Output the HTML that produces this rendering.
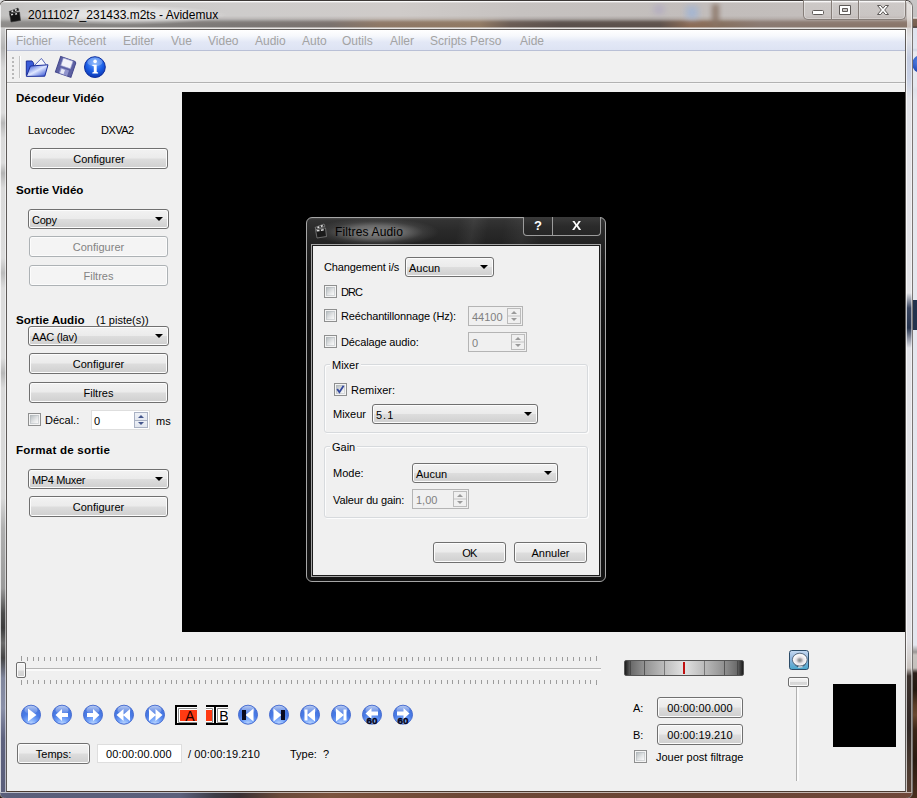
<!DOCTYPE html>
<html lang="fr">
<head>
<meta charset="utf-8">
<title>20111027_231433.m2ts - Avidemux</title>
<style>
html,body{margin:0;padding:0;}
body{width:917px;height:798px;overflow:hidden;position:relative;background:#2a1c14;font-family:"Liberation Sans",sans-serif;font-size:11px;color:#000;}
.abs{position:absolute;}
/* desktop strip on right */
#desk{left:905px;top:0;width:12px;height:798px;background:linear-gradient(#c8c6c6 0,#c4c2c2 17px,#f0eeee 18px,#7e6656 19.5px,#765e4e 26px,#3e3432 27.3px,#dfe3ee 28.5px,#e2e6f0 48px,#d0d6e6 50px,#e8eaf0 52px,#e6e8ee 86px,#dfe2ea 90px,#e6e8ee 100px,#e4e6ee 645px,#9a9694 652px,#c8c4c0 655px,#c4c0bc 668px,#2a1e18 673px,#24180f 690px,#5a3c26 705px,#6a4830 715px,#3a2416 730px,#2a1a10 760px,#4a2e1e 798px);}
/* main window frame */
#win{left:-1px;top:0;width:914px;height:799px;border-radius:7px 7px 7px 7px;background:#d6d2d0;box-sizing:border-box;border:1px solid rgba(60,56,54,.6);border-top-color:#3c3836;overflow:hidden;}
#glass{left:0;top:0;width:912px;height:29px;background:linear-gradient(90deg,#c3c2c1 0,#c8c7c6 30px,#cecccb 230px,#cfcbc9 400px,#c6c2c0 520px,#c2bdbb 700px,#c4bfbd 911px);}
#glines{left:0;top:0;width:912px;height:29px;background:linear-gradient(rgba(255,255,255,.9) 0,rgba(255,255,255,.85) 1px,rgba(255,255,255,0) 1.8px,rgba(255,255,255,0) 26px,rgba(235,232,230,.8) 27px,rgba(240,238,236,.9) 28px);}
#band{left:0;top:15px;width:912px;height:12px;background:linear-gradient(90deg,#8e8c8a 0,#858381 120px,#7c7876 230px,#7a726e 330px,#8e7866 380px,#917a64 480px,#6a5c54 510px,#5a504c 560px,#5e524c 660px,#8c6c56 690px,#86705f 720px,#8a7a72 760px,#8a766a 911px);-webkit-mask-image:linear-gradient(rgba(0,0,0,0) 0,rgba(0,0,0,.25) 3px,rgba(0,0,0,.9) 6px,#000 8px,#000 11px,rgba(0,0,0,.5) 12px);mask-image:linear-gradient(rgba(0,0,0,0) 0,rgba(0,0,0,.25) 3px,rgba(0,0,0,.9) 6px,#000 8px,#000 11px,rgba(0,0,0,.5) 12px);}
#tglow{left:22px;top:4px;width:205px;height:20px;background:radial-gradient(ellipse 50% 50% at 50% 50%,rgba(255,255,255,.6) 0,rgba(255,255,255,.45) 60%,rgba(255,255,255,0) 100%);}
#client{left:6px;top:28px;width:900px;height:763px;background:#f0f0f0;box-sizing:border-box;border:1px solid #5e5a58;border-bottom-color:#4a3a30;}
#menubar{left:7px;top:30px;width:898px;height:20px;background:linear-gradient(#ffffff 0,#f6f8fc 30%,#e3e8f6 60%,#dde3f3 100%);border-bottom:1px solid #b9c0d6;font-size:12px;color:#a3a3a3;}
#menubar span{position:absolute;top:4px;line-height:15px;white-space:nowrap;}
#toolbar{left:7px;top:51px;width:898px;height:31px;background:#f0f0f0;border-bottom:1px solid #b2b2b2;box-shadow:0 1px 0 #f6f6f6;}
#video{left:182px;top:92px;width:723px;height:540px;background:#000;}
#fl{left:0;top:27px;width:6px;height:771px;background:linear-gradient(#cfcfcf 0,#b4b4b4 20px,#d8d8d8 40px,#dcdcdc 85px,#b8b8b8 95px,#dadada 110px,#dcdcdc 135px,#b4b4b4 145px,#dadada 160px,#dcdcdc 230px,#bcbcbc 245px,#dcdcdc 260px,#dcdcdc 330px,#b8b8b8 345px,#dadada 360px,#d8d8d8 470px,#b0b0b0 500px,#9a9a9a 560px,#4c4c4c 585px,#3c3c3c 600px,#6a6a6a 615px,#444 630px,#80869c 650px,#8a90a8 680px,#5e627e 710px,#5a5e7a 771px);box-shadow:inset 1px 0 0 rgba(255,255,255,.75),inset -1px 0 0 rgba(255,255,255,.55);}
#fr{left:906px;top:27px;width:6px;height:771px;background:linear-gradient(#d8d4d2 0,#e2e2e6 10px,#c4cce0 30px,#c8d0e4 50px,#e2e3e8 70px,#e4e4e8 265px,#3a4660 280px,#26344e 300px,#8a90a0 310px,#e2e3e8 320px,#e2e2e6 610px,#d4d0ce 630px,#c8c2be 640px,#3a302c 648px,#2e2624 700px,#4a3a30 740px,#5a4034 771px);box-shadow:inset 1px 0 0 rgba(255,255,255,.7),inset -1px 0 0 rgba(255,255,255,.5);}
#fb{left:0;top:791px;width:912px;height:7px;background:linear-gradient(90deg,#5a5e7a 0,#5c607c 180px,#3c3c46 215px,#3a3034 240px,#6a4a3a 280px,#7c543e 330px,#6e4836 460px,#6a4434 700px,#70483a 912px);box-shadow:inset 0 1px 0 rgba(255,255,255,.6),inset 0 -1px 0 rgba(255,255,255,.35);}
#ui{left:0;top:0;width:917px;height:798px;}
.title{left:28px;top:6px;font-size:12px;line-height:16px;color:#000;white-space:nowrap;}
.lbl{position:absolute;white-space:nowrap;line-height:14px;height:14px;}
.b{font-weight:bold;font-size:11.6px;}
.btn{position:absolute;box-sizing:border-box;border:1px solid #707070;border-radius:3px;background:linear-gradient(#f2f2f2 0,#ebebeb 48%,#dddddd 52%,#cfcfcf 100%);box-shadow:inset 0 0 0 1px #fcfcfc;text-align:center;white-space:nowrap;}
.btn.dis{border-color:#adb2b5;background:#f4f4f4;color:#838383;box-shadow:inset 0 0 0 1px #fcfcfc;}
.combo{position:absolute;box-sizing:border-box;border:1px solid #707070;border-radius:3px;background:linear-gradient(#f2f2f2 0,#ebebeb 48%,#dddddd 52%,#cfcfcf 100%);box-shadow:inset 0 0 0 1px #fcfcfc;white-space:nowrap;text-align:left;padding-left:3px;}
.combo:after{content:"";position:absolute;right:5px;top:7px;border-left:4px solid transparent;border-right:4px solid transparent;border-top:4px solid #000;}
.chk{position:absolute;width:13px;height:13px;box-sizing:border-box;border:1px solid #8e8f8f;background:linear-gradient(135deg,#a9afb1 0,#c3c8ca 25%,#e4e6e7 55%,#f8f8f8 80%,#fff 100%);box-shadow:inset 0 0 0 1px #f4f4f4, inset 0 0 0 2px rgba(174,179,185,.45);}
.spin{position:absolute;box-sizing:border-box;border:1px solid #dedede;background:#fff;padding-left:6px;}
.spin.dis{border-color:#b4b4b4;background:#f0f0f0;color:#808080;}
.sb{position:absolute;right:1px;top:1px;width:14px;bottom:1px;background:linear-gradient(#eef1f7 0,#e4e8f0 49%,#aab2c4 50%,#aab2c4 54%,#eef1f7 55%,#e2e6ee 100%);border:1px solid #aab2c4;box-sizing:border-box;}
.sb:before{content:"";position:absolute;left:3px;top:2px;border-left:3px solid transparent;border-right:3px solid transparent;border-bottom:3px solid #44568c;}
.sb:after{content:"";position:absolute;left:3px;bottom:2px;border-left:3px solid transparent;border-right:3px solid transparent;border-top:3px solid #44568c;}
.spin.dis .sb{border-color:#bcbcbc;background:linear-gradient(#f0f0f0 0,#f0f0f0 46%,#bcbcbc 47%,#bcbcbc 53%,#f0f0f0 54%,#f0f0f0 100%);}
.spin.dis .sb:before{border-bottom-color:#9a9a9a;}
.spin.dis .sb:after{border-top-color:#9a9a9a;}
#dlg{left:306px;top:217px;width:300px;height:365px;box-sizing:border-box;border:1px solid #a6a6a6;border-radius:6px;background:linear-gradient(100deg,rgba(255,255,255,0) 0,rgba(255,255,255,0) 150px,rgba(255,255,255,.06) 165px,rgba(255,255,255,0) 180px,rgba(255,255,255,0) 195px,rgba(255,255,255,.05) 215px,rgba(255,255,255,0) 235px) 0 0/100% 27px no-repeat,linear-gradient(#484848 0,#333 2px,#2a2a2a 12px,#222 26px,#1a1a1a 50px,#131313 110px);}
#dglow{left:6px;top:0px;width:126px;height:27px;background:radial-gradient(ellipse 50% 52% at 50% 52%,rgba(140,140,140,.9) 0,rgba(125,125,125,.75) 45%,rgba(90,90,90,.35) 75%,rgba(50,50,50,0) 100%);}
#dcap{left:216px;top:-1px;width:78px;height:19px;box-sizing:border-box;border:1px solid #9c9c9c;border-top:none;border-radius:0 0 4px 4px;background:linear-gradient(#3a3a3a,#2b2b2b 50%,#262626);color:#fff;}
#dcap b{position:absolute;top:0;height:18px;line-height:18px;text-align:center;font-size:13px;font-family:"Liberation Sans",sans-serif;}
#dcap i{position:absolute;left:28px;top:0;width:1px;height:18px;background:#9c9c9c;}
#dcl{left:4px;top:26px;width:290px;height:333px;box-sizing:border-box;border:1px solid #a4a4a4;background:#f0f0f0;box-shadow:inset 0 0 0 1px #1c1c1c;}
.grp{position:absolute;box-sizing:border-box;border:1px solid #d7dadd;border-radius:3px;box-shadow:inset 1px 1px 0 #fcfcfc,1px 1px 0 #fcfcfc;}
.gl{background:#f0f0f0;padding:0 2px;}
#cap{left:803px;top:0;width:103px;height:20px;box-sizing:border-box;border:1px solid #857d78;border-top:none;border-radius:0 0 5px 5px;background:linear-gradient(rgba(255,255,255,.18),rgba(255,255,255,.08));box-shadow:inset 0 0 0 1px rgba(255,255,255,.35);}
#cap i{position:absolute;top:0;width:1px;height:19px;background:#857d78;box-shadow:1px 0 0 rgba(255,255,255,.3);}
</style>
</head>
<body>
<div class="abs" style="left:0;top:0;width:5px;height:5px;background:#dcdcdc"></div><div id="desk" class="abs"><div class="abs" style="left:7px;top:55px;width:18px;height:18px;border-radius:9px;background:radial-gradient(circle at 40% 35%,#5a8ae8 0,#2a54c0 55%,#16307c 100%)"></div><div class="abs" style="left:7px;top:300px;width:10px;height:30px;background:#22324c"></div></div>
<div id="win" class="abs">
 <div id="glass" class="abs"></div><div id="band" class="abs"></div><div class="abs" style="left:686px;top:5px;width:12px;height:13px;background:#9fb4d6;filter:blur(3px);opacity:.8"></div><div class="abs" style="left:712px;top:3px;width:7px;height:22px;background:#8a7466;filter:blur(2.5px);opacity:.85"></div><div class="abs" style="left:654px;top:4px;width:10px;height:9px;background:#a9a2c4;filter:blur(3px);opacity:.6"></div><div id="glines" class="abs"></div><div class="abs" style="left:0;top:4px;width:1px;height:23px;background:rgba(255,255,255,.75)"></div><div class="abs" style="left:907px;top:2px;width:5px;height:26px;background:linear-gradient(rgba(232,229,227,.9),rgba(226,220,216,.85) 60%,rgba(214,204,198,.8));border-radius:0 5px 0 0"></div><div class="abs" style="left:911px;top:4px;width:1px;height:23px;background:rgba(255,255,255,.6)"></div><div id="tglow" class="abs"></div>
 <div class="abs title">20111027_231433.m2ts - Avidemux</div>
 <div id="fl" class="abs"></div><div id="fr" class="abs"></div><div id="fb" class="abs"></div><div id="client" class="abs"></div>
</div>
<div id="ui" class="abs">
  <div id="cap" class="abs"><i style="left:27px"></i><i style="left:54px"></i>
<svg class="abs" style="left:0;top:0" width="102" height="20" viewBox="0 0 102 20">
<rect x="8.5" y="10.5" width="11" height="4" rx="1" fill="#fff" stroke="#5e5a58" stroke-width="1"/>
<path d="M35.5 5.5 h11 v9 h-11 Z M38.5 8.5 v3 h5 v-3 Z" fill="#fff" fill-rule="evenodd" stroke="#5e5a58" stroke-width="1"/>
<path d="M73.5 5.5 h3.2 l2.3 2.8 l2.3 -2.8 h3.2 l-3.8 4.5 l3.8 4.5 h-3.2 l-2.3 -2.8 l-2.3 2.8 h-3.2 l3.8 -4.5 Z" fill="#fff" stroke="#5e5a58" stroke-width="1" stroke-linejoin="round"/>
</svg></div>
<svg class="abs" style="left:8px;top:7px" width="14" height="16" viewBox="0 0 14 16">
<path d="M1.5 6.5 L11.5 5 L12.5 13.5 L3 15 Z" fill="#141414" stroke="#3a3a3a" stroke-width=".6"/>
<path d="M1 4.5 L10 1 L11 3.2 L2 6.6 Z" fill="#1c1c1c" stroke="#444" stroke-width=".5"/>
<path d="M3.2 3.9 L5 3.2 L5.6 4.6 L3.8 5.3 Z M6.6 2.6 L8.4 1.9 L9 3.3 L7.2 4 Z" fill="#f2f2f2"/>
<path d="M3 7 L5 6.7 L5.2 8.1 L3.2 8.4 Z M7 6.4 L9 6.1 L9.2 7.5 L7.2 7.8 Z" fill="#dcdcdc"/>
</svg>
  <div id="menubar" class="abs">
   <span style="left:9px">Fichier</span><span style="left:61px">Récent</span><span style="left:116px">Editer</span><span style="left:164px">Vue</span><span style="left:201px">Video</span><span style="left:248px">Audio</span><span style="left:295px">Auto</span><span style="left:335px">Outils</span><span style="left:383px">Aller</span><span style="left:423px">Scripts Perso</span><span style="left:513px">Aide</span>
  </div>
  <div id="toolbar" class="abs">
   <div class="abs" style="left:5px;top:6px;width:2px;height:22px;background:repeating-linear-gradient(#b8b8b8 0,#b8b8b8 2px,transparent 2px,transparent 4px);"></div>
   <div class="abs" style="left:12px;top:5px;width:1px;height:22px;background:#c4c4c4;border-right:1px solid #fff;"></div>
   <svg class="abs" style="left:18px;top:4px" width="26" height="24" viewBox="0 0 26 24">
    <path d="M8 12 L16.4 3.4 L21 9.6 L12 18 Z" fill="#f7f8fc" stroke="#5a68b8" stroke-width="1"/>
    <path d="M1.3 6 L7 6 L8.6 8.2 L8.6 20.5 L1.3 20.5 Z" fill="#3a5cd8" stroke="#1c2f9a" stroke-width="1"/>
    <defs><linearGradient id="fo" x1="0" y1="0" x2="1" y2="1"><stop offset="0" stop-color="#1c3fd0"/><stop offset=".5" stop-color="#dfe7ff"/><stop offset="1" stop-color="#1b3ccc"/></linearGradient></defs>
    <path d="M5.4 11 L23 9.8 L19.8 21.2 L1.4 21.4 Z" fill="url(#fo)" stroke="#1c2f9a" stroke-width="1"/>
   </svg>
   <svg class="abs" style="left:46px;top:3px" width="26" height="26" viewBox="0 0 26 26">
    <g transform="rotate(19 12.8 12.9)">
    <path d="M4.6 4.7 L19.6 4.7 L21 6.1 L21 21.1 L4.6 21.1 Z" fill="#5c60a2" stroke="#44488c" stroke-width="1"/>
    <rect x="7.6" y="5.2" width="10.2" height="8" fill="#f2f2f8" stroke="#9a9ed0" stroke-width=".6"/>
    <rect x="8.2" y="15.2" width="8.8" height="5.9" fill="#9094cc"/>
    <rect x="9.4" y="16" width="3.6" height="4.6" fill="#e8eaf6"/>
    </g>
   </svg>
   <svg class="abs" style="left:75px;top:3px" width="26" height="26" viewBox="0 0 26 26">
    <defs><radialGradient id="ig" cx=".5" cy=".3" r=".75"><stop offset="0" stop-color="#6aa8ff"/><stop offset=".55" stop-color="#1a5ee6"/><stop offset="1" stop-color="#0a2fa8"/></radialGradient></defs>
    <circle cx="12.9" cy="13.1" r="10.4" fill="url(#ig)" stroke="#0c2c9c" stroke-width="1"/>
    <ellipse cx="12.9" cy="8" rx="7.6" ry="4.4" fill="#fff" opacity=".25"/>
    <circle cx="13.1" cy="7.4" r="1.8" fill="#fff"/>
    <path d="M10.3 10.8 L14.7 10.8 L14.7 18 L16.1 18.6 L16.1 19.6 L10.3 19.6 L10.3 18.6 L11.8 18 L11.8 12.2 L10.3 11.8 Z" fill="#fff"/>
   </svg>
  </div>
  <div id="video" class="abs"></div>
<div class="lbl b" style="left:16px;top:91px">Décodeur Vidéo</div>
<div class="lbl " style="left:28px;top:123px">Lavcodec</div>
<div class="lbl " style="left:101px;top:123px"><span style="letter-spacing:-0.55px">DXVA2</span></div>
<div class="btn " style="left:30px;top:148px;width:138px;height:21px;line-height:21px">Configurer</div>
<div class="lbl b" style="left:16px;top:183px">Sortie Vidéo</div>
<div class="combo" style="left:28px;top:209px;width:141px;height:20px;line-height:21px"><span style="letter-spacing:-0.25px">Copy</span></div>
<div class="btn dis" style="left:29px;top:236px;width:139px;height:21px;line-height:21px">Configurer</div>
<div class="btn dis" style="left:29px;top:265px;width:139px;height:21px;line-height:21px">Filtres</div>
<div class="lbl b" style="left:16px;top:313px">Sortie Audio</div>
<div class="lbl " style="left:96px;top:313px">(1 piste(s))</div>
<div class="combo" style="left:28px;top:326px;width:141px;height:20px;line-height:21px"><span style="letter-spacing:-0.2px">AAC (lav)</span></div>
<div class="btn " style="left:29px;top:353px;width:139px;height:21px;line-height:21px">Configurer</div>
<div class="btn " style="left:29px;top:382px;width:139px;height:21px;line-height:21px">Filtres</div>
<div class="chk" style="left:28px;top:413px"></div>
<div class="lbl " style="left:45px;top:413px">Décal.:</div>
<div class="spin" style="left:91px;top:410px;width:59px;height:20px;line-height:20px;padding-left:2px">0<div class="sb"></div></div>
<div class="lbl " style="left:156px;top:414px">ms</div>
<div class="lbl b" style="left:16px;top:443px"><span style="letter-spacing:.2px">Format de sortie</span></div>
<div class="combo" style="left:28px;top:469px;width:141px;height:20px;line-height:21px"><span style="letter-spacing:-0.35px">MP4 Muxer</span></div>
<div class="btn " style="left:29px;top:496px;width:139px;height:21px;line-height:21px">Configurer</div>
<svg class="abs" style="left:20px;top:656px" width="580" height="5" fill="#9c9c9c"><rect x="1" y="0" width="1" height="5"/><rect x="7" y="1" width="1" height="4"/><rect x="13" y="1" width="1" height="4"/><rect x="18" y="1" width="1" height="4"/><rect x="24" y="1" width="1" height="4"/><rect x="30" y="1" width="1" height="4"/><rect x="36" y="1" width="1" height="4"/><rect x="41" y="1" width="1" height="4"/><rect x="47" y="1" width="1" height="4"/><rect x="53" y="1" width="1" height="4"/><rect x="59" y="1" width="1" height="4"/><rect x="64" y="1" width="1" height="4"/><rect x="70" y="1" width="1" height="4"/><rect x="76" y="1" width="1" height="4"/><rect x="82" y="1" width="1" height="4"/><rect x="87" y="1" width="1" height="4"/><rect x="93" y="1" width="1" height="4"/><rect x="99" y="1" width="1" height="4"/><rect x="105" y="1" width="1" height="4"/><rect x="110" y="1" width="1" height="4"/><rect x="116" y="1" width="1" height="4"/><rect x="122" y="1" width="1" height="4"/><rect x="128" y="1" width="1" height="4"/><rect x="133" y="1" width="1" height="4"/><rect x="139" y="1" width="1" height="4"/><rect x="145" y="1" width="1" height="4"/><rect x="151" y="1" width="1" height="4"/><rect x="156" y="1" width="1" height="4"/><rect x="162" y="1" width="1" height="4"/><rect x="168" y="1" width="1" height="4"/><rect x="174" y="1" width="1" height="4"/><rect x="179" y="1" width="1" height="4"/><rect x="185" y="1" width="1" height="4"/><rect x="191" y="1" width="1" height="4"/><rect x="197" y="1" width="1" height="4"/><rect x="202" y="1" width="1" height="4"/><rect x="208" y="1" width="1" height="4"/><rect x="214" y="1" width="1" height="4"/><rect x="220" y="1" width="1" height="4"/><rect x="225" y="1" width="1" height="4"/><rect x="231" y="1" width="1" height="4"/><rect x="237" y="1" width="1" height="4"/><rect x="243" y="1" width="1" height="4"/><rect x="248" y="1" width="1" height="4"/><rect x="254" y="1" width="1" height="4"/><rect x="260" y="1" width="1" height="4"/><rect x="266" y="1" width="1" height="4"/><rect x="271" y="1" width="1" height="4"/><rect x="277" y="1" width="1" height="4"/><rect x="283" y="1" width="1" height="4"/><rect x="289" y="1" width="1" height="4"/><rect x="294" y="1" width="1" height="4"/><rect x="300" y="1" width="1" height="4"/><rect x="306" y="1" width="1" height="4"/><rect x="312" y="1" width="1" height="4"/><rect x="317" y="1" width="1" height="4"/><rect x="323" y="1" width="1" height="4"/><rect x="329" y="1" width="1" height="4"/><rect x="335" y="1" width="1" height="4"/><rect x="340" y="1" width="1" height="4"/><rect x="346" y="1" width="1" height="4"/><rect x="352" y="1" width="1" height="4"/><rect x="358" y="1" width="1" height="4"/><rect x="363" y="1" width="1" height="4"/><rect x="369" y="1" width="1" height="4"/><rect x="375" y="1" width="1" height="4"/><rect x="381" y="1" width="1" height="4"/><rect x="386" y="1" width="1" height="4"/><rect x="392" y="1" width="1" height="4"/><rect x="398" y="1" width="1" height="4"/><rect x="404" y="1" width="1" height="4"/><rect x="409" y="1" width="1" height="4"/><rect x="415" y="1" width="1" height="4"/><rect x="421" y="1" width="1" height="4"/><rect x="427" y="1" width="1" height="4"/><rect x="432" y="1" width="1" height="4"/><rect x="438" y="1" width="1" height="4"/><rect x="444" y="1" width="1" height="4"/><rect x="450" y="1" width="1" height="4"/><rect x="455" y="1" width="1" height="4"/><rect x="461" y="1" width="1" height="4"/><rect x="467" y="1" width="1" height="4"/><rect x="473" y="1" width="1" height="4"/><rect x="478" y="1" width="1" height="4"/><rect x="484" y="1" width="1" height="4"/><rect x="490" y="1" width="1" height="4"/><rect x="496" y="1" width="1" height="4"/><rect x="501" y="1" width="1" height="4"/><rect x="507" y="1" width="1" height="4"/><rect x="513" y="1" width="1" height="4"/><rect x="519" y="1" width="1" height="4"/><rect x="524" y="1" width="1" height="4"/><rect x="530" y="1" width="1" height="4"/><rect x="536" y="1" width="1" height="4"/><rect x="542" y="1" width="1" height="4"/><rect x="547" y="1" width="1" height="4"/><rect x="553" y="1" width="1" height="4"/><rect x="559" y="1" width="1" height="4"/><rect x="565" y="1" width="1" height="4"/><rect x="570" y="1" width="1" height="4"/><rect x="576" y="0" width="1" height="5"/></svg>
<svg class="abs" style="left:20px;top:680px" width="580" height="5" fill="#9c9c9c"><rect x="1" y="0" width="1" height="5"/><rect x="7" y="0" width="1" height="4"/><rect x="13" y="0" width="1" height="4"/><rect x="18" y="0" width="1" height="4"/><rect x="24" y="0" width="1" height="4"/><rect x="30" y="0" width="1" height="4"/><rect x="36" y="0" width="1" height="4"/><rect x="41" y="0" width="1" height="4"/><rect x="47" y="0" width="1" height="4"/><rect x="53" y="0" width="1" height="4"/><rect x="59" y="0" width="1" height="4"/><rect x="64" y="0" width="1" height="4"/><rect x="70" y="0" width="1" height="4"/><rect x="76" y="0" width="1" height="4"/><rect x="82" y="0" width="1" height="4"/><rect x="87" y="0" width="1" height="4"/><rect x="93" y="0" width="1" height="4"/><rect x="99" y="0" width="1" height="4"/><rect x="105" y="0" width="1" height="4"/><rect x="110" y="0" width="1" height="4"/><rect x="116" y="0" width="1" height="4"/><rect x="122" y="0" width="1" height="4"/><rect x="128" y="0" width="1" height="4"/><rect x="133" y="0" width="1" height="4"/><rect x="139" y="0" width="1" height="4"/><rect x="145" y="0" width="1" height="4"/><rect x="151" y="0" width="1" height="4"/><rect x="156" y="0" width="1" height="4"/><rect x="162" y="0" width="1" height="4"/><rect x="168" y="0" width="1" height="4"/><rect x="174" y="0" width="1" height="4"/><rect x="179" y="0" width="1" height="4"/><rect x="185" y="0" width="1" height="4"/><rect x="191" y="0" width="1" height="4"/><rect x="197" y="0" width="1" height="4"/><rect x="202" y="0" width="1" height="4"/><rect x="208" y="0" width="1" height="4"/><rect x="214" y="0" width="1" height="4"/><rect x="220" y="0" width="1" height="4"/><rect x="225" y="0" width="1" height="4"/><rect x="231" y="0" width="1" height="4"/><rect x="237" y="0" width="1" height="4"/><rect x="243" y="0" width="1" height="4"/><rect x="248" y="0" width="1" height="4"/><rect x="254" y="0" width="1" height="4"/><rect x="260" y="0" width="1" height="4"/><rect x="266" y="0" width="1" height="4"/><rect x="271" y="0" width="1" height="4"/><rect x="277" y="0" width="1" height="4"/><rect x="283" y="0" width="1" height="4"/><rect x="289" y="0" width="1" height="4"/><rect x="294" y="0" width="1" height="4"/><rect x="300" y="0" width="1" height="4"/><rect x="306" y="0" width="1" height="4"/><rect x="312" y="0" width="1" height="4"/><rect x="317" y="0" width="1" height="4"/><rect x="323" y="0" width="1" height="4"/><rect x="329" y="0" width="1" height="4"/><rect x="335" y="0" width="1" height="4"/><rect x="340" y="0" width="1" height="4"/><rect x="346" y="0" width="1" height="4"/><rect x="352" y="0" width="1" height="4"/><rect x="358" y="0" width="1" height="4"/><rect x="363" y="0" width="1" height="4"/><rect x="369" y="0" width="1" height="4"/><rect x="375" y="0" width="1" height="4"/><rect x="381" y="0" width="1" height="4"/><rect x="386" y="0" width="1" height="4"/><rect x="392" y="0" width="1" height="4"/><rect x="398" y="0" width="1" height="4"/><rect x="404" y="0" width="1" height="4"/><rect x="409" y="0" width="1" height="4"/><rect x="415" y="0" width="1" height="4"/><rect x="421" y="0" width="1" height="4"/><rect x="427" y="0" width="1" height="4"/><rect x="432" y="0" width="1" height="4"/><rect x="438" y="0" width="1" height="4"/><rect x="444" y="0" width="1" height="4"/><rect x="450" y="0" width="1" height="4"/><rect x="455" y="0" width="1" height="4"/><rect x="461" y="0" width="1" height="4"/><rect x="467" y="0" width="1" height="4"/><rect x="473" y="0" width="1" height="4"/><rect x="478" y="0" width="1" height="4"/><rect x="484" y="0" width="1" height="4"/><rect x="490" y="0" width="1" height="4"/><rect x="496" y="0" width="1" height="4"/><rect x="501" y="0" width="1" height="4"/><rect x="507" y="0" width="1" height="4"/><rect x="513" y="0" width="1" height="4"/><rect x="519" y="0" width="1" height="4"/><rect x="524" y="0" width="1" height="4"/><rect x="530" y="0" width="1" height="4"/><rect x="536" y="0" width="1" height="4"/><rect x="542" y="0" width="1" height="4"/><rect x="547" y="0" width="1" height="4"/><rect x="553" y="0" width="1" height="4"/><rect x="559" y="0" width="1" height="4"/><rect x="565" y="0" width="1" height="4"/><rect x="570" y="0" width="1" height="4"/><rect x="576" y="0" width="1" height="5"/></svg>
<div class="abs" style="left:18px;top:668px;width:583px;height:1px;background:#b4b4b4;border-bottom:2px solid #fafafa"></div>
<div class="abs" style="left:16px;top:662px;width:10px;height:16px;box-sizing:border-box;border:1px solid #6e6e6e;border-radius:2px;background:linear-gradient(#f4f4f4 0,#ececec 50%,#d8d8d8 60%,#d0d0d0 100%);box-shadow:inset 0 0 0 1px #fafafa"></div>
<svg width="0" height="0" style="position:absolute"><defs>
<radialGradient id="pb" cx=".5" cy="1" r=".95"><stop offset="0" stop-color="#c4dcff"/><stop offset=".3" stop-color="#7aa8fa"/><stop offset=".6" stop-color="#4a7ce6"/><stop offset="1" stop-color="#4272dc"/></radialGradient>
<linearGradient id="ph" x1="0" y1="0" x2="0" y2="1"><stop offset="0" stop-color="#fff" stop-opacity=".6"/><stop offset="1" stop-color="#fff" stop-opacity=".05"/></linearGradient>
<g id="pbb"><circle cx="11" cy="10.7" r="9.5" fill="url(#pb)" stroke="#456bd0" stroke-width="1"/><ellipse cx="11" cy="6" rx="6.6" ry="4.2" fill="url(#ph)"/></g>
</defs></svg>
<svg class="abs" style="left:20px;top:704px" width="22" height="22" viewBox="0 0 22 22"><use href="#pbb"/><path d="M8 4.5 L16.5 11 L8 17.5 Z" fill="#fff"/></svg>
<svg class="abs" style="left:51px;top:704px" width="22" height="22" viewBox="0 0 22 22"><use href="#pbb"/><path d="M4.5 11 L11 5 L11 9 L17 9 L17 13 L11 13 L11 17 Z" fill="#fff"/></svg>
<svg class="abs" style="left:82px;top:704px" width="22" height="22" viewBox="0 0 22 22"><use href="#pbb"/><path d="M17.5 11 L11 5 L11 9 L5 9 L5 13 L11 13 L11 17 Z" fill="#fff"/></svg>
<svg class="abs" style="left:113px;top:704px" width="22" height="22" viewBox="0 0 22 22"><use href="#pbb"/><path d="M3.5 11 L10.5 5 L10.5 17 Z M10 11 L17 5 L17 17 Z" fill="#fff"/></svg>
<svg class="abs" style="left:144px;top:704px" width="22" height="22" viewBox="0 0 22 22"><use href="#pbb"/><path d="M18.5 11 L11.5 5 L11.5 17 Z M12 11 L5 5 L5 17 Z" fill="#fff"/></svg>
<svg class="abs" style="left:175px;top:705px" width="22" height="20" viewBox="0 0 22 20">
<rect x="0" y="0" width="22" height="20" fill="#fff"/>
<path d="M22 1 L1 1 L1 19 L22 19" fill="none" stroke="#000" stroke-width="2"/>
<path d="M22 3.5 L3.5 3.5 L3.5 17.5 L22 17.5" fill="none" stroke="#8c8c8c" stroke-width="1"/>
<rect x="5" y="5" width="17" height="11" fill="#ff3a12"/>
<text x="15" y="15.5" font-family="Liberation Sans, sans-serif" font-size="14" text-anchor="middle" fill="#200">A</text>
</svg>
<svg class="abs" style="left:206px;top:705px" width="22" height="20" viewBox="0 0 22 20">
<rect x="0" y="0" width="22" height="20" fill="#fff"/>
<path d="M0 1 L22 1 M0 19 L22 19 M9 1 L9 19" fill="none" stroke="#000" stroke-width="2"/>
<path d="M0 3.5 L6.5 3.5 L6.5 17.5 L0 17.5 M22 3.5 L11.5 3.5 L11.5 17.5 L22 17.5" fill="none" stroke="#8c8c8c" stroke-width="1"/>
<rect x="0" y="5" width="6" height="11" fill="#ff3a12"/>
<text x="18" y="15.5" font-family="Liberation Sans, sans-serif" font-size="14" text-anchor="middle" fill="#000">B</text>
</svg>
<svg class="abs" style="left:237px;top:704px" width="22" height="22" viewBox="0 0 22 22"><use href="#pbb"/><path d="M16.5 4.5 L8.5 11 L16.5 17.5 Z" fill="#fff"/><rect x="5" y="6" width="4" height="10" fill="#0a0a1e"/></svg>
<svg class="abs" style="left:268px;top:704px" width="22" height="22" viewBox="0 0 22 22"><use href="#pbb"/><path d="M5.5 4.5 L13.5 11 L5.5 17.5 Z" fill="#fff"/><rect x="13" y="6" width="4" height="10" fill="#0a0a1e"/></svg>
<svg class="abs" style="left:299px;top:704px" width="22" height="22" viewBox="0 0 22 22"><use href="#pbb"/><path d="M16 4.5 L8 11 L16 17.5 Z" fill="#fff"/><rect x="5.5" y="5.5" width="3" height="11" fill="#fff"/></svg>
<svg class="abs" style="left:330px;top:704px" width="22" height="22" viewBox="0 0 22 22"><use href="#pbb"/><path d="M6 4.5 L14 11 L6 17.5 Z" fill="#fff"/><rect x="13.5" y="5.5" width="3" height="11" fill="#fff"/></svg>
<svg class="abs" style="left:361px;top:704px" width="22" height="22" viewBox="0 0 22 22"><use href="#pbb"/><path d="M4.5 9.5 L10.5 4 L10.5 7.5 L17 7.5 L17 11.5 L10.5 11.5 L10.5 15 Z" fill="#fff"/><text x="5.5" y="20" font-family="Liberation Sans, sans-serif" font-size="8.5" font-weight="bold" textLength="11" lengthAdjust="spacingAndGlyphs" fill="#04041a" stroke="#04041a" stroke-width=".4">60</text></svg>
<svg class="abs" style="left:392px;top:704px" width="22" height="22" viewBox="0 0 22 22"><use href="#pbb"/><path d="M17.5 9.5 L11.5 4 L11.5 7.5 L5 7.5 L5 11.5 L11.5 11.5 L11.5 15 Z" fill="#fff"/><text x="5.5" y="20" font-family="Liberation Sans, sans-serif" font-size="8.5" font-weight="bold" textLength="11" lengthAdjust="spacingAndGlyphs" fill="#04041a" stroke="#04041a" stroke-width=".4">60</text></svg>
<div class="btn " style="left:17px;top:743px;width:73px;height:21px;line-height:21px">Temps:</div>
<div class="spin" style="left:97px;top:744px;width:85px;height:19px;line-height:18px;padding-left:8px;letter-spacing:.12px">00:00:00.000</div>
<div class="lbl " style="left:188px;top:747px"><span style="letter-spacing:.12px">/ 00:00:19.210</span></div>
<div class="lbl " style="left:290px;top:747px">Type:&nbsp; ?</div>
<div class="abs" style="left:624px;top:660px;width:120px;height:16px;box-sizing:border-box;border:1px solid #555;border-radius:2px;background:linear-gradient(90deg,#1c1c1c 0,#4a4a4a 3%,#6a6a6a 5%,#8e8e8e 15%,#b4b4b4 30%,#e2e2e2 50%,#b4b4b4 70%,#8e8e8e 85%,#6a6a6a 95%,#4a4a4a 97%,#1c1c1c 100%);">
<i class="abs" style="left:5px;top:0;width:1px;height:14px;background:#2e2e2e;opacity:.5"></i><i class="abs" style="left:19px;top:0;width:1px;height:14px;background:#555"></i><i class="abs" style="left:39px;top:0;width:1px;height:14px;background:#777"></i><i class="abs" style="left:79px;top:0;width:1px;height:14px;background:#777"></i><i class="abs" style="left:99px;top:0;width:1px;height:14px;background:#555"></i><i class="abs" style="left:112px;top:0;width:1px;height:14px;background:#2e2e2e;opacity:.5"></i>
<i class="abs" style="left:58px;top:1px;width:2px;height:12px;background:#c01010"></i></div>
<div class="lbl " style="left:633px;top:701px">A:</div>
<div class="btn " style="left:657px;top:697px;width:86px;height:21px;line-height:21px"><span style="letter-spacing:.12px">00:00:00.000</span></div>
<div class="lbl " style="left:633px;top:728px">B:</div>
<div class="btn " style="left:657px;top:724px;width:86px;height:21px;line-height:21px"><span style="letter-spacing:.12px">00:00:19.210</span></div>
<div class="chk" style="left:634px;top:750px"></div>
<div class="lbl " style="left:656px;top:750px">Jouer post filtrage</div>
<svg class="abs" style="left:789px;top:650px" width="20" height="20" viewBox="0 0 20 20">
<defs><linearGradient id="vg" x1="0" y1="0" x2="0" y2="1"><stop offset="0" stop-color="#c6daf2"/><stop offset=".45" stop-color="#8fb5dd"/><stop offset="1" stop-color="#48a6cc"/></linearGradient>
<radialGradient id="vc" cx=".5" cy=".55" r=".55"><stop offset="0" stop-color="#7c8e86"/><stop offset=".22" stop-color="#a9a6aa"/><stop offset=".45" stop-color="#e6e2e6"/><stop offset=".8" stop-color="#fbfbfb"/><stop offset="1" stop-color="#c4c9d2"/></radialGradient></defs>
<rect x=".5" y=".5" width="19" height="19" rx="2.2" fill="url(#vg)" stroke="#2c4c68"/>
<path d="M5.2 13.2 Q10.8 20.5 16.6 13.4" fill="none" stroke="#2e4e6a" stroke-width="1.3"/>
<ellipse cx="10.8" cy="9.6" rx="7.4" ry="6.4" fill="url(#vc)" stroke="#46586c" stroke-width=".8"/>
<path d="M9.2 17.1 L13.6 16.7" fill="none" stroke="#fff" stroke-width="1.1"/>
</svg>
<div class="abs" style="left:796px;top:686px;width:1px;height:95px;background:#b0b0b0;border-right:2px solid #fafafa"></div>
<div class="abs" style="left:788px;top:677px;width:21px;height:10px;box-sizing:border-box;border:1px solid #6e6e6e;border-radius:2px;background:linear-gradient(#f6f6f6 0,#ededed 45%,#d6d6d6 55%,#dcdcdc 100%);box-shadow:inset 0 0 0 1px #fafafa"></div>
<div class="abs" style="left:833px;top:684px;width:63px;height:63px;background:#000"></div>
<div id="dlg" class="abs"><div id="dglow" class="abs"></div><div id="dcap" class="abs"><b style="left:0;width:28px">?</b><i></i><b style="left:29px;width:47px;font-size:12px;transform:scaleX(1.15)">X</b></div><div id="dcl" class="abs"></div></div>
<svg class="abs" style="left:314px;top:223px" width="14" height="16" viewBox="0 0 14 16">
<path d="M1.5 6.5 L11.5 5 L12.5 13.5 L3 15 Z" fill="#1a1a1a" stroke="#8a8a8a" stroke-width=".7"/>
<path d="M1 4.5 L10 1 L11 3.2 L2 6.6 Z" fill="#2a2a2a" stroke="#9a9a9a" stroke-width=".6"/>
<path d="M3.2 3.9 L5 3.2 L5.6 4.6 L3.8 5.3 Z M6.6 2.6 L8.4 1.9 L9 3.3 L7.2 4 Z" fill="#f4f4f4"/>
<path d="M2.6 7.1 L5.4 6.7 L5.6 8.2 L2.8 8.6 Z M6.8 6.5 L9.6 6.1 L9.8 7.6 L7 8 Z" fill="#dadada"/>
</svg>
<div class="lbl" style="left:335px;top:224px;font-size:12px;line-height:16px;height:16px;color:#000;letter-spacing:.15px">Filtres Audio</div>
<div class="lbl " style="left:324px;top:260px"><span style="letter-spacing:-.13px">Changement i/s</span></div>
<div class="combo" style="left:405px;top:257px;width:89px;height:20px;line-height:21px">Aucun</div>
<div class="chk" style="left:324px;top:285px"></div>
<div class="lbl " style="left:341px;top:285px"><span style="letter-spacing:-0.9px">DRC</span></div>
<div class="chk" style="left:324px;top:309px"></div>
<div class="lbl " style="left:341px;top:309px"><span style="letter-spacing:-.13px">Reéchantillonnage (Hz):</span></div>
<div class="spin dis" style="left:468px;top:306px;width:55px;height:20px;line-height:20px;padding-left:3px">44100<div class="sb"></div></div>
<div class="chk" style="left:324px;top:335px"></div>
<div class="lbl " style="left:341px;top:335px"><span style="letter-spacing:-.13px">Décalage audio:</span></div>
<div class="spin dis" style="left:468px;top:332px;width:59px;height:20px;line-height:20px;padding-left:3px">0<div class="sb"></div></div>
<div class="grp" style="left:324px;top:364px;width:264px;height:69px"></div>
<div class="lbl " style="left:330px;top:358px"><span class="gl">Mixer</span></div>
<div class="chk on" style="left:334px;top:383px"><svg width="11" height="11" viewBox="0 0 11 11" style="position:absolute;left:0;top:0"><path d="M2.2 5 L4.4 8.2 L8.6 1.8" fill="none" stroke="#33489c" stroke-width="1.8"/></svg></div>
<div class="lbl " style="left:351px;top:383px">Remixer:</div>
<div class="lbl " style="left:333px;top:407px">Mixeur</div>
<div class="combo" style="left:372px;top:404px;width:166px;height:20px;line-height:21px"><span style="letter-spacing:1px">5.1</span></div>
<div class="grp" style="left:324px;top:446px;width:264px;height:72px"></div>
<div class="lbl " style="left:330px;top:440px"><span class="gl">Gain</span></div>
<div class="lbl " style="left:333px;top:466px">Mode:</div>
<div class="combo" style="left:412px;top:463px;width:146px;height:20px;line-height:21px">Aucun</div>
<div class="lbl " style="left:333px;top:493px"><span style="letter-spacing:-.13px">Valeur du gain:</span></div>
<div class="spin dis" style="left:412px;top:489px;width:57px;height:20px;line-height:20px;padding-left:3px">1,00<div class="sb"></div></div>
<div class="btn " style="left:433px;top:542px;width:73px;height:21px;line-height:21px"><span style="letter-spacing:-0.8px">OK</span></div>
<div class="btn " style="left:514px;top:542px;width:73px;height:21px;line-height:21px">Annuler</div>
</div>
</body>
</html>
